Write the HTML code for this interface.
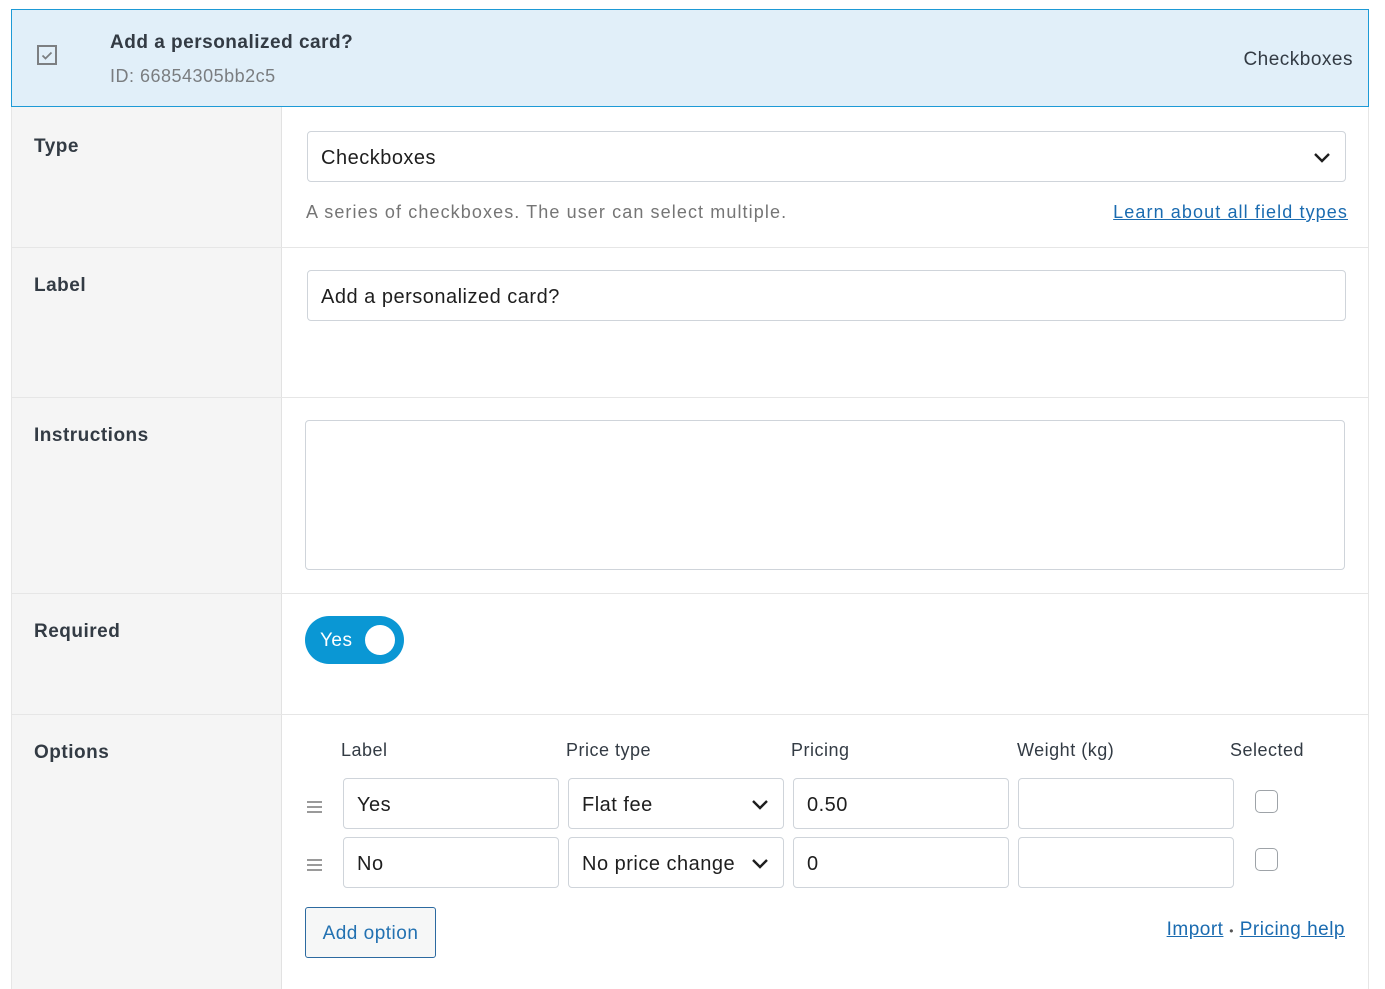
<!DOCTYPE html>
<html><head><style>
*{box-sizing:border-box;margin:0;padding:0}
body{width:1385px;height:989px;background:#fff;font-family:"Liberation Sans",sans-serif;color:#1e1e1e;position:relative;overflow:hidden;letter-spacing:0.5px}
.a{position:absolute}
.hdr{left:11px;top:9px;width:1358px;height:98px;background:#e1eff9;border:1px solid #1d9ad6}
.lbl{font-weight:bold;font-size:19px;color:#333b44;left:34px}
.inp{position:absolute;background:#fff;border:1px solid #cfd4da;border-radius:4px;font-size:20px;padding-left:13px;padding-top:3px;display:flex;align-items:center}
.sep{position:absolute;left:12px;width:1356px;height:1px;background:#e6e6e6}
.th{font-size:18px;color:#333b44;top:740px}
.chev{position:absolute;right:14px;top:50%;margin-top:-5px}
.cb{position:absolute;width:23px;height:23px;border:1px solid #9ea3a8;border-radius:5px;background:#fff}
.drag{position:absolute;left:307px;width:15px}
.drag i{display:block;height:2px;background:#9a9a9a;margin-bottom:3px}
a{color:#1a6bb0;text-decoration:underline}
</style></head><body>
<div class="a hdr"></div>
<svg class="a" style="left:37px;top:45px" width="22" height="22" viewBox="0 0 22 22"><rect x="1" y="1" width="18" height="18" fill="none" stroke="#7c7f82" stroke-width="2"/><path d="M5.5 10.5l3 3 6-6" fill="none" stroke="#7c7f82" stroke-width="1.8"/></svg>
<div class="a" style="left:110px;top:32px;font-size:19px;font-weight:bold;color:#333b44">Add a personalized card?</div>
<div class="a" style="left:110px;top:66px;font-size:18px;color:#7a7d80">ID: 66854305bb2c5</div>
<div class="a" style="right:32px;top:49px;font-size:19px;color:#333b44">Checkboxes</div>

<div class="a" style="left:12px;top:107px;width:270px;height:882px;background:#f5f5f5;border-right:1px solid #e2e2e2"></div>
<div class="a" style="left:1368px;top:107px;width:1px;height:882px;background:#e6e6e6"></div>
<div class="a" style="left:11px;top:107px;width:1px;height:882px;background:#e6e6e6"></div>
<div class="sep" style="top:247px"></div>
<div class="sep" style="top:397px"></div>
<div class="sep" style="top:593px"></div>
<div class="sep" style="top:714px"></div>

<div class="a lbl" style="top:136px">Type</div>
<div class="a lbl" style="top:275px">Label</div>
<div class="a lbl" style="top:425px">Instructions</div>
<div class="a lbl" style="top:621px">Required</div>
<div class="a lbl" style="top:742px">Options</div>

<div class="inp" style="left:307px;top:131px;width:1039px;height:51px">Checkboxes<svg class="chev" width="18" height="11" viewBox="0 0 18 11"><path d="M2 2l7 7 7-7" fill="none" stroke="#1e1e1e" stroke-width="2.4"/></svg></div>
<div class="a" style="left:306px;top:202px;font-size:18px;color:#757575;letter-spacing:1.1px">A series of checkboxes. The user can select multiple.</div>
<div class="a" style="right:37px;top:202px;font-size:18px;letter-spacing:1.1px"><a>Learn about all field types</a></div>

<div class="inp" style="left:307px;top:270px;width:1039px;height:51px">Add a personalized card?</div>
<div class="inp" style="left:305px;top:420px;width:1040px;height:150px"></div>

<div class="a" style="left:305px;top:616px;width:99px;height:48px;border-radius:24px;background:#0a97d4"></div>
<div class="a" style="left:320px;top:630px;font-size:19px;color:#fff">Yes</div>
<div class="a" style="left:365px;top:625px;width:30px;height:30px;border-radius:50%;background:#fff"></div>

<div class="a th" style="left:341px">Label</div>
<div class="a th" style="left:566px">Price type</div>
<div class="a th" style="left:791px">Pricing</div>
<div class="a th" style="left:1017px">Weight (kg)</div>
<div class="a th" style="left:1230px">Selected</div>

<div class="drag" style="top:801px"><i></i><i></i><i></i></div>
<div class="drag" style="top:859px"><i></i><i></i><i></i></div>

<div class="inp" style="left:343px;top:778px;width:216px;height:51px">Yes</div>
<div class="inp" style="left:568px;top:778px;width:216px;height:51px">Flat fee<svg class="chev" width="18" height="11" viewBox="0 0 18 11"><path d="M2 2l7 7 7-7" fill="none" stroke="#1e1e1e" stroke-width="2.4"/></svg></div>
<div class="inp" style="left:793px;top:778px;width:216px;height:51px">0.50</div>
<div class="inp" style="left:1018px;top:778px;width:216px;height:51px"></div>
<div class="cb" style="left:1255px;top:790px"></div>

<div class="inp" style="left:343px;top:837px;width:216px;height:51px">No</div>
<div class="inp" style="left:568px;top:837px;width:216px;height:51px">No price change<svg class="chev" width="18" height="11" viewBox="0 0 18 11"><path d="M2 2l7 7 7-7" fill="none" stroke="#1e1e1e" stroke-width="2.4"/></svg></div>
<div class="inp" style="left:793px;top:837px;width:216px;height:51px">0</div>
<div class="inp" style="left:1018px;top:837px;width:216px;height:51px"></div>
<div class="cb" style="left:1255px;top:848px"></div>

<div class="a" style="left:305px;top:907px;width:131px;height:51px;border:1px solid #2c6aa0;border-radius:3px;background:#f6f7f7;color:#2271b1;font-size:19px;display:flex;align-items:center;justify-content:center;padding-top:2px">Add option</div>
<div class="a" style="right:40px;top:919px;font-size:19px;color:#333"><a>Import</a> <span style="font-size:12px;color:#555">•</span> <a>Pricing help</a></div>
</body></html>
